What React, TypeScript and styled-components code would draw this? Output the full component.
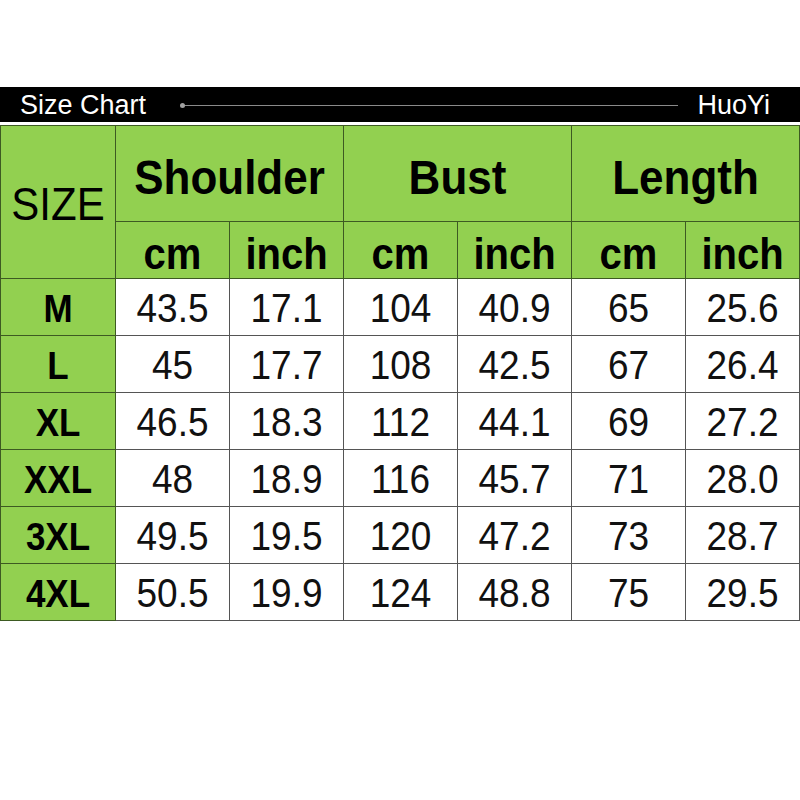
import styled, { createGlobalStyle } from "styled-components";

const GlobalStyle = createGlobalStyle`
  html, body {
    margin: 0;
    padding: 0;
    background: #ffffff;
  }
`;

const green = "#92d050";

const Page = styled.div`
  width: 800px;
  height: 800px;
  padding-top: 87px;
  box-sizing: border-box;
  background: #ffffff;
  font-family: "Liberation Sans", Arial, sans-serif;
`;

const TitleBar = styled.div`
  height: 35px;
  background: #000000;
  display: flex;
  align-items: center;
  padding: 0 30px 0 20px;
  color: #ffffff;
  font-size: 27px;
  margin-bottom: 3px;
`;

const TitleText = styled.span`
  line-height: 1;
  padding-top: 1px;
`;

const Rule = styled.div`
  flex: 1;
  height: 1px;
  margin: 2px 19px 0 35px;
  background: #8a8a8a;
  position: relative;

  &::before {
    content: "";
    position: absolute;
    left: -1px;
    top: -2px;
    width: 5px;
    height: 5px;
    border-radius: 50%;
    background: #a0a0a0;
  }
`;

const Table = styled.table`
  width: 800px;
  border-collapse: collapse;
  table-layout: fixed;
`;

const HeadCell = styled.th<{ $big?: boolean }>`
  background: ${green};
  border: 1px solid #3d5a22;
  height: 89px;
  padding: 6px 0 0;
  color: #000000;
  font-weight: ${({ $big }) => ($big ? 400 : 700)};
  font-size: ${({ $big }) => ($big ? 42 : 44)}px;
  text-align: center;
  vertical-align: middle;
  line-height: 1;
`;

const UnitCell = styled.th`
  background: ${green};
  border: 1px solid #3d5a22;
  height: 48px;
  padding: 8px 0 0;
  font-size: 40px;
  font-weight: 700;
  text-align: center;
  vertical-align: middle;
  line-height: 1;
`;

const SizeCell = styled.td`
  background: ${green};
  border: 1px solid #3d5a22;
  height: 53px;
  padding: 3px 0 0;
  font-size: 35px;
  font-weight: 700;
  text-align: center;
  line-height: 1;
`;

const ValueCell = styled.td`
  background: #ffffff;
  border: 1px solid #555555;
  height: 53px;
  padding: 3px 0 0;
  font-size: 37px;
  font-weight: 400;
  color: #111111;
  text-align: center;
  line-height: 1;
`;

const Stretch = styled.span`
  display: inline-block;
  transform: scaleY(1.1);
`;

const rows: [string, string[]][] = [
  ["M", ["43.5", "17.1", "104", "40.9", "65", "25.6"]],
  ["L", ["45", "17.7", "108", "42.5", "67", "26.4"]],
  ["XL", ["46.5", "18.3", "112", "44.1", "69", "27.2"]],
  ["XXL", ["48", "18.9", "116", "45.7", "71", "28.0"]],
  ["3XL", ["49.5", "19.5", "120", "47.2", "73", "28.7"]],
  ["4XL", ["50.5", "19.9", "124", "48.8", "75", "29.5"]],
];

const groups = ["Shoulder", "Bust", "Length"];

export default function App() {
  return (
    <Page>
      <GlobalStyle />
      <TitleBar>
        <TitleText>Size Chart</TitleText>
        <Rule />
        <TitleText>HuoYi</TitleText>
      </TitleBar>
      <Table>
        <colgroup>
          <col style={{ width: 115 }} />
          {[0, 1, 2, 3, 4, 5].map((i) => (
            <col key={i} style={{ width: 114 }} />
          ))}
        </colgroup>
        <thead>
          <tr>
            <HeadCell rowSpan={2} $big>
              <Stretch>SIZE</Stretch>
            </HeadCell>
            {groups.map((g) => (
              <HeadCell key={g} colSpan={2}>
                <Stretch>{g}</Stretch>
              </HeadCell>
            ))}
          </tr>
          <tr>
            {groups.map((g) => [
              <UnitCell key={g + "cm"}>
                <Stretch>cm</Stretch>
              </UnitCell>,
              <UnitCell key={g + "in"}>
                <Stretch>inch</Stretch>
              </UnitCell>,
            ])}
          </tr>
        </thead>
        <tbody>
          {rows.map(([size, values]) => (
            <tr key={size}>
              <SizeCell>
                <Stretch>{size}</Stretch>
              </SizeCell>
              {values.map((v, i) => (
                <ValueCell key={i}>
                  <Stretch>{v}</Stretch>
                </ValueCell>
              ))}
            </tr>
          ))}
        </tbody>
      </Table>
    </Page>
  );
}
